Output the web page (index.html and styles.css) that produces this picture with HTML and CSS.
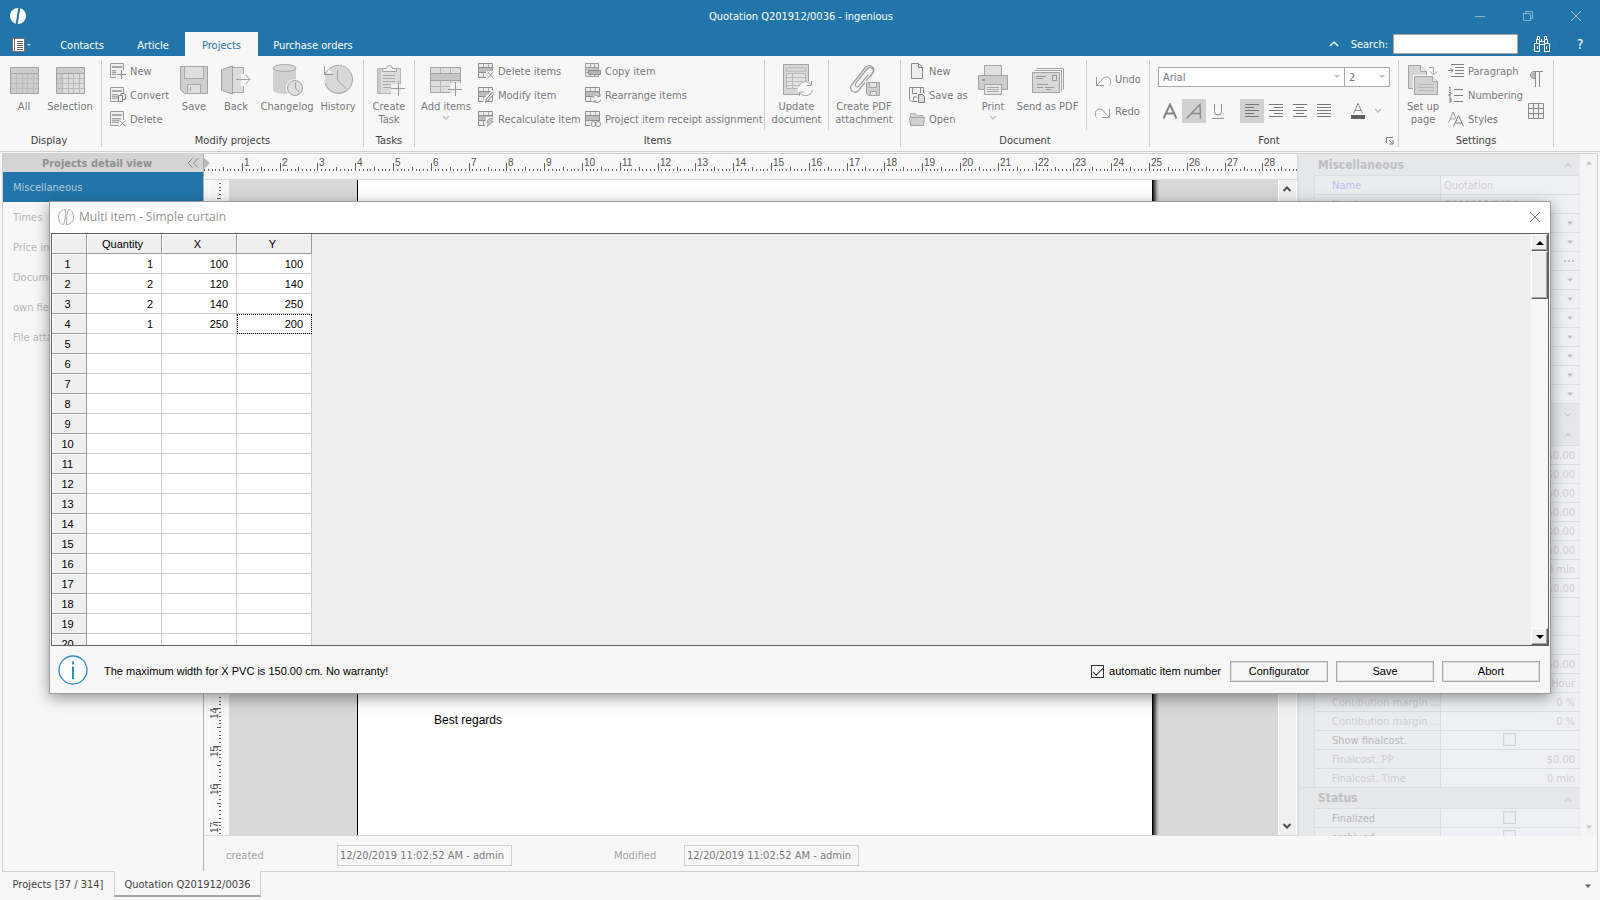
FILE: index.html
```
<!DOCTYPE html>
<html lang="en">
<head>
<meta charset="utf-8">
<title>Quotation Q201912/0036 - ingenious</title>
<link rel="stylesheet" href="styles.css">
</head>
<body>
<svg class="defs" aria-hidden="true">
  <symbol id="i-table" viewBox="0 0 32 32"><path d="M2.5 3.5h28v26h-28z" fill="#cdcdcd" stroke="#a3a3a3"/><path d="M3 9.5h27" stroke="#a3a3a3"/><path d="M3 14.5h27M3 19.5h27M3 24.5h27M8.5 10v19M14.5 10v19M19.500 10v19M25.500 10v19" stroke="#bcbcbc" fill="none"/></symbol>
  <symbol id="i-tablesel" viewBox="0 0 32 32"><path d="M2.5 3.500h28v26h-28z" fill="#dcdcdc" stroke="#a3a3a3"/><path d="M3 4h27v5H3zM3 10h5v19H3z" fill="#cdcdcd"/><path d="M3 9.500h27" stroke="#a3a3a3"/><path d="M3 14.500h27M3 19.500h27M3 24.500h27M8.500 10v19M14.500 10v19M19.500 10v19M25.500 10v19" stroke="#b8b8b8" fill="none"/></symbol>
  <symbol id="i-form" viewBox="0 0 16 16"><path d="M.500 .500h13v14H.500z" fill="#f0f0f0" stroke="#9a9a9a"/><path d="M2 3h10v2H2z" fill="#a9a9a9"/><path d="M2 7h9v5H2z" fill="#d0d0d0"/><path d="M2 7.500h9M2 9.500h9M2 11.500h9" stroke="#a9a9a9"/></symbol>
  <symbol id="i-new" viewBox="0 0 16 16"><use href="#i-form"/><path d="M6 7h10v9H6z" fill="#f7f7f7" opacity=".85"/><path d="M11.500 7v9M7 11.500h9" stroke="#8c8c8c" fill="none"/></symbol>
  <symbol id="i-convert" viewBox="0 0 16 16"><use href="#i-form"/><path d="M8 6h8v10H8z" fill="#f7f7f7"/><path d="M8.500 8.500h4v6h-4zM11 8V6.500h3l1.500 1.500v4.500H13" stroke="#808080" fill="#eee"/></symbol>
  <symbol id="i-delete" viewBox="0 0 16 16"><use href="#i-form"/><path d="M9 9h7v7H9z" fill="#f7f7f7"/><path d="M9.500 9.500l6 6M15.500 9.500l-6 6" stroke="#999"/></symbol>
  <symbol id="i-save" viewBox="0 0 32 32"><path d="M2.500 2.500h27v27H6.500l-4-4z" fill="#cfcfcf" stroke="#a3a3a3"/><path d="M6.500 2.500h19v12h-19zM9.500 20.500h13v9h-13z" fill="#dedede" stroke="#a8a8a8"/><path d="M12.500 23v4" stroke="#a3a3a3"/></symbol>
  <symbol id="i-back" viewBox="0 0 32 32"><path d="M12.500 3.500h11v25h-11z" fill="#dcdcdc" stroke="#a3a3a3"/><path d="M21 10h7v12h-7z" fill="#f7f7f7"/><path d="M1.500 5.500l11-3.500v28l-11-3.500z" fill="#cfcfcf" stroke="#a0a0a0"/><path d="M16 15.500h14M25.500 11l4.500 4.500-4.500 4.500" stroke="#a0a0a0" fill="none"/></symbol>
  <symbol id="i-changelog" viewBox="0 0 32 32"><path d="M2 4v22c0 5 23 5 23 0V4z" fill="#cfcfcf"/><ellipse cx="13.500" cy="4" rx="11.500" ry="3.500" fill="#d8d8d8" stroke="#a8a8a8"/><circle cx="24" cy="24" r="9" fill="#f7f7f7"/><circle cx="24" cy="24" r="7.500" fill="#dedede" stroke="#a0a0a0"/><path d="M24.500 18.500V24l3.500 4" stroke="#a0a0a0" fill="none"/></symbol>
  <symbol id="i-history" viewBox="0 0 32 32"><circle cx="16.500" cy="16" r="14" fill="#d8d8d8"/><path d="M4 9a14 14 0 1 1-1 10" stroke="#a3a3a3" fill="none"/><path d="M4 3l6 6H4z" fill="#f7f7f7"/><path d="M2.500 2v8.500H11M2.500 10.500L6 6" stroke="#999" fill="none"/><path d="M15.500 6v10l8.500 8.500" stroke="#a3a3a3" fill="none"/></symbol>
  <symbol id="i-task" viewBox="0 0 32 32"><path d="M4.500 4.500h23v25h-23z" fill="#dcdcdc" stroke="#b5b5b5"/><path d="M5 5h3v24H5z" fill="#cacaca"/><path d="M9.500 7.500V4.500h4a3 3 0 0 1 6 0h4v3z" fill="#eee" stroke="#a3a3a3"/><path d="M10 11.500h12M10 14.500h12M10 17.500h12M10 20.500h8M10 23.500h9" stroke="#aaa"/><path d="M18 20h14v12H18z" fill="#f7f7f7" opacity=".8"/><path d="M25.500 17v15M18 24.500h14" stroke="#999"/></symbol>
  <symbol id="i-add" viewBox="0 0 32 32"><path d="M.500 3.500h30v25H.500z" fill="#dedede" stroke="#a3a3a3"/><path d="M10.500 4v24M20.500 4v24M1 22.500h29" stroke="#b5b5b5"/><path d="M.500 9.500h30v7H.500z" fill="#c6c6c6" stroke="#a3a3a3"/><path d="M20 19h12v12H20z" fill="#f7f7f7" opacity=".85"/><path d="M25.500 18v14M18 25.500h14" stroke="#999"/></symbol>
  <symbol id="i-rows" viewBox="0 0 16 16"><path d="M.500 .500h14v14H.500z" fill="#ececec" stroke="#8f8f8f"/><path d="M5.500 1v13M10.500 1v13" stroke="#b0b0b0"/><path d="M.500 4.500h14v5H.500z" fill="#bcbcbc" stroke="#8f8f8f"/></symbol>
  <symbol id="i-rdel" viewBox="0 0 16 16"><use href="#i-rows"/><path d="M8 8h8v8H8z" fill="#f7f7f7"/><path d="M9.500 8.500l6 7M15.500 8.500l-6 7" stroke="#999"/></symbol>
  <symbol id="i-rmod" viewBox="0 0 16 16"><use href="#i-rows"/><path d="M5 16l1-5 8-8 3 3-9 10z" fill="#f7f7f7"/><path d="M7.500 15.500l1-3.500 6-7 1.500 1.500-6 7.500z" stroke="#8c8c8c" fill="#ddd"/></symbol>
  <symbol id="i-rcalc" viewBox="0 0 16 16"><use href="#i-rows"/><path d="M8 6h8v10H7z" fill="#f7f7f7"/><path d="M11 7.500h4l-2 3h2.500L9 15.500l1.500-4h-2z" stroke="#a8a8a8" fill="#ccc"/></symbol>
  <symbol id="i-rcopy" viewBox="0 0 16 16"><path d="M.500 .500h13v13H.500z" fill="#ececec" stroke="#a0a0a0"/><path d="M.500 4.500h13M.500 9.500h13M5.500 1v13M9.500 1v13" stroke="#a0a0a0"/><path d="M1 5h12v3H1z" fill="#c4c4c4"/><path d="M3.500 7.500h12v4h-12z" fill="#b5b5b5" stroke="#8c8c8c"/></symbol>
  <symbol id="i-rarr" viewBox="0 0 16 16"><use href="#i-rows"/><circle cx="12" cy="12" r="5" fill="#f7f7f7"/><path d="M8 11a4 4 0 0 1 7-1.500V7M16 12.500a4 4 0 0 1-7 1.500v2.500M15 9.500h-2.500M9 14h2.500" stroke="#8f8f8f" fill="none"/></symbol>
  <symbol id="i-rlink" viewBox="0 0 16 16"><use href="#i-rows"/><path d="M5 10h11v6H5z" fill="#f7f7f7"/><circle cx="8.500" cy="13" r="2.500" stroke="#8f8f8f" fill="none"/><circle cx="13" cy="13" r="2.500" stroke="#8f8f8f" fill="none"/></symbol>
  <symbol id="i-update" viewBox="0 0 32 32"><path d="M2.500 .500h25v30h-25z" fill="#d6d6d6" stroke="#a3a3a3"/><path d="M5.500 4h19v3h-19zM5.500 9.500h19v15h-19z" fill="#e2e2e2" stroke="#b5b5b5"/><path d="M6 13.500h18M6 17.500h18M6 21.500h18M11.500 10v14" stroke="#b8b8b8"/><circle cx="24.500" cy="25" r="8" fill="#f7f7f7"/><path d="M17.500 23a7 7 0 0 1 13-1.500V17M31.500 26a7 7 0 0 1-13 2v4M30.500 21.500H26M18.500 28H23" stroke="#a3a3a3" fill="none"/></symbol>
  <symbol id="i-clip" viewBox="0 0 32 32"><path d="M8 19L19 5c3-4 8 0 5.500 4L11 26c-4 5-11 0-7.500-5L17 4c4-5 11-1 8 5l-3 4M8 19c-2 3 1 5 3 3L20 11" stroke="#a3a3a3" fill="none" stroke-width="1.300"/><path d="M17 17h15v15H17z" fill="#f7f7f7"/><path d="M18.500 18.500h13v13h-11l-2-2z" fill="#cfcfcf" stroke="#a3a3a3"/><path d="M21.500 18.500h7v5h-7zM22.500 27.500h6v4h-6z" fill="#e4e4e4" stroke="#a3a3a3"/></symbol>
  <symbol id="i-page" viewBox="0 0 16 16"><path d="M2.500 .500h7l4 4v11h-11z" fill="#ececec" stroke="#8c8c8c"/><path d="M9.500 .500v4h4" stroke="#8c8c8c" fill="none"/></symbol>
  <symbol id="i-saveas" viewBox="0 0 16 16"><path d="M.500 .500h14v14H2.500l-2-2z" fill="#f4f4f4" stroke="#8c8c8c"/><path d="M3.500 .500v6h8v-6M4.500 15v-5H9" stroke="#8c8c8c" fill="none"/><path d="M8 6h8v10H8z" fill="#f7f7f7"/><path d="M9.500 7.500h4l2 2v6h-6z" fill="#ddd" stroke="#7c7c7c"/></symbol>
  <symbol id="i-open" viewBox="0 0 16 16"><path d="M1.500 14V2.500h5l1.500 2h6V14z" fill="#d4d4d4" stroke="#b0b0b0"/><path d="M.500 6.500h15l-1 8h-13z" fill="#d0d0d0" stroke="#a3a3a3"/></symbol>
  <symbol id="i-print" viewBox="0 0 32 32"><path d="M7.500 1.500h17v11h-17z" fill="#e0e0e0" stroke="#a3a3a3"/><path d="M1.500 11.500h29v14h-29z" fill="#cdcdcd" stroke="#a3a3a3"/><path d="M5 15h3v2H5z" fill="#999"/><path d="M7.500 20.500h17v10h-17z" fill="#e6e6e6" stroke="#a3a3a3"/><path d="M10 23.500h12M10 25.500h12M10 27.500h12" stroke="#aaa"/></symbol>
  <symbol id="i-send" viewBox="0 0 32 32"><path d="M4.500 4.500h27v21M2.500 6.500h27v21" stroke="#a3a3a3" fill="none"/><path d="M.500 8.500h27v20H.500z" fill="#d8d8d8" stroke="#a3a3a3"/><path d="M4 12.500h10M4 14.500h7M5 20.500h11M5 23.500h6M13 23.500h9M14 25.500h5" stroke="#999"/><path d="M20.500 11.500h4v5h-4z" fill="#ddd" stroke="#999"/></symbol>
  <symbol id="i-undo" viewBox="0 0 16 16"><path d="M1.500 6v8.500H9M1.500 14.500L8 7.500c3-3 7-1 7.500 2 .500 2 0 4-1 5" stroke="#999" fill="none"/></symbol>
  <symbol id="i-redo" viewBox="0 0 16 16"><path d="M14.500 6v8.500H7M14.500 14.500L8 7.500c-3-3-7-1-7.500 2-.500 2 0 4 1 5" stroke="#999" fill="none"/></symbol>
  <symbol id="i-setup" viewBox="0 0 32 32"><path d="M1.500 1.500h12l6 6v17h-18z" fill="#d6d6d6" stroke="#a3a3a3"/><path d="M13.500 1.500v6h6" fill="#eee" stroke="#a3a3a3"/><path d="M22 3.500h4.500v7M23 7.500l3.500 3.500 4-3.500" stroke="#a3a3a3" fill="none"/><path d="M6 11h26v21H6z" fill="#f7f7f7"/><path d="M7.500 12.500h18l5 5v13h-23z" fill="#d2d2d2" stroke="#a3a3a3"/><path d="M25.500 12.500v5h5" fill="#eee" stroke="#a3a3a3"/><path d="M11 20.500h16M11 23.500h16M11 26.500h16" stroke="#b8b8b8"/></symbol>
  <symbol id="i-para" viewBox="0 0 16 16"><path d="M3 1.500h13M7 4.500h9M7 7.500h9M7 10.500h9M3 13.500h13M0 7.500h5M2.500 5L5 7.500 2.500 10" stroke="#808080" fill="none"/></symbol>
  <symbol id="i-num" viewBox="0 0 16 16"><path d="M6 2.500h9M6 8.500h9M6 14.500h9M1 .500h1v4M1 5.500h2v2H1v1.500h2M1 11h2v4H1M1 13h2" stroke="#808080" fill="none"/></symbol>
  <symbol id="i-styles" viewBox="0 0 16 16"><path d="M.500 12L5 1l4 9M2 8h5" stroke="#a3a3a3" fill="none"/><path d="M5.500 15.500l5-11 5 11M7.500 12h6.500" stroke="#808080" fill="none"/></symbol>
  <symbol id="i-pil" viewBox="0 0 16 16"><path d="M15 .500H6a3.500 3.500 0 0 0 0 7h1" stroke="#8c8c8c" fill="none"/><path d="M7 1H6a3 3 0 0 0 0 6h1z" fill="#b8b8b8"/><path d="M7.500 .500V16M11.500 .500V16" stroke="#8c8c8c"/></symbol>
  <symbol id="i-grid" viewBox="0 0 16 16"><path d="M.500 .500h15v15H.500zM.500 5.500h15M.500 10.500h15M5.500 .500v15M10.500 .500v15" stroke="#8c8c8c" fill="#eee"/></symbol>
  <symbol id="i-b" viewBox="0 0 16 16"><path d="M1.500 15.500L8 1.500 14.500 15.500M4 10.500h8" stroke="#858585" stroke-width="2" fill="none"/></symbol>
  <symbol id="i-i" viewBox="0 0 16 16"><path d="M.500 15.500L14 1.500l.500 14M5 10.500h9.500" stroke="#8c8c8c" stroke-width="1.500" fill="none"/></symbol>
  <symbol id="i-u" viewBox="0 0 16 16"><path d="M4.500 1v7.500a3.500 3.500 0 0 0 7 0V1M2 15.500h12" stroke="#8c8c8c" fill="none"/></symbol>
  <symbol id="i-al" viewBox="0 0 16 16"><path d="M1 1.500h14M1 4.500h9M1 7.500h14M1 10.500h9M1 13.500h14" stroke="#777"/></symbol>
  <symbol id="i-ar" viewBox="0 0 16 16"><path d="M1 1.500h14M6 4.500h9M1 7.500h14M6 10.500h9M1 13.500h14" stroke="#777"/></symbol>
  <symbol id="i-ac" viewBox="0 0 16 16"><path d="M1 1.500h14M4 4.500h8M1 7.500h14M4 10.500h8M1 13.500h14" stroke="#777"/></symbol>
  <symbol id="i-aj" viewBox="0 0 16 16"><path d="M1 1.500h14M1 4.500h14M1 7.500h14M1 10.500h14M1 13.500h14" stroke="#777"/></symbol>
  <symbol id="i-color" viewBox="0 0 16 16"><path d="M3.500 10.500L8 .500l4.500 10M5 7.500h6" stroke="#8c8c8c" fill="none"/><path d="M1 12h14v4H1z" fill="#606060"/></symbol>
  <symbol id="i-down" viewBox="0 0 8 8"><path d="M1 2l3 3 3-3" stroke="#c0c0c0" stroke-width="1.500" fill="none"/></symbol>
  <symbol id="i-launch" viewBox="0 0 8 8"><path d="M.500 6V.500H7M3 3l3.500 3.500M7 3v4H3" stroke="#808080" fill="none"/></symbol>
  <symbol id="i-tri" viewBox="0 0 8 8"><path d="M1 2.500h6L4 6z" fill="#c0c1c5"/></symbol>
  <symbol id="i-triup" viewBox="0 0 8 8"><path d="M1 5.500h6L4 2z" fill="#c0c1c5"/></symbol>
  <symbol id="i-dots" viewBox="0 0 12 8"><path d="M1 3h2v2H1zM5 3h2v2H5zM9 3h2v2H9z" fill="#c0c1c5"/></symbol>
</svg>

<header class="top">
  <div class="titlebar">
    <svg class="logo" viewBox="0 0 16 16"><circle cx="8" cy="8" r="8" fill="#fff"/><path d="M9.500 -1L6.500 17" stroke="#2275aa" stroke-width="2"/></svg>
    <span class="wtitle">Quotation Q201912/0036 - ingenious</span>
    <div class="winbtns">
      <button aria-label="Minimize"><svg viewBox="0 0 12 12"><path d="M1 6.500h10" stroke="#85b3d1" fill="none"/></svg></button>
      <button aria-label="Restore"><svg viewBox="0 0 12 12"><path d="M1.500 3.500h7v7h-7zM3.500 3V1.500h7v7H9" stroke="#85b3d1" fill="none"/></svg></button>
      <button aria-label="Close"><svg viewBox="0 0 12 12"><path d="M1 1l10 10M11 1L1 11" stroke="#a5c8de" fill="none"/></svg></button>
    </div>
  </div>
  <nav class="tabs">
    <button class="appmenu" aria-label="Menu"><svg viewBox="0 0 20 14"><path d="M.500 .500h12v13H.500z" fill="#fff" stroke="#7a6a60"/><path d="M2.500 0v14" stroke="#7a6a60"/><path d="M5 3.500h6M5 5.500h6M5 7.500h6M5 9.500h6M5 11.500h6" stroke="#666"/><path d="M15 6h4l-2 2z" fill="#c8d6e0"/></svg></button>
    <button class="tab">Contacts</button>
    <button class="tab t2">Article</button>
    <button class="tab on">Projects</button>
    <button class="tab t4">Purchase orders</button>
    <div class="search">
      <button class="coll" aria-label="Collapse ribbon"><svg viewBox="0 0 10 8"><path d="M1 6l4-4 4 4" stroke="#fff" stroke-width="1.500" fill="none"/></svg></button>
      <label for="q">Search:</label><input id="q" type="text">
      <button class="sq" aria-label="Find"><svg viewBox="0 0 16 16"><path d="M.500 7.500h5v8h-5zM10.500 7.500h5v8h-5zM2.500 7.500V3.500h3v4M10.500 7.500v-4h3v4M3.500 3V.500h2V3M10.500 3V.500h2V3M5.500 5.500h5M6 8.500h4M3.500 10v3M12.500 10v3M7.500 3v3" stroke="#fff" fill="none"/></svg></button>
      <button class="sq help">?</button>
    </div>
  </nav>
</header>

<section class="ribbon">
  <div class="group g-display"><div class="items">
      <button class="big w46"><svg><use href="#i-table"/></svg>All</button>
      <button class="big w46"><svg><use href="#i-tablesel"/></svg>Selection</button>
    </div><h2>Display</h2></div>
  <div class="group g-modify"><div class="items">
      <div class="col c1"><button><svg><use href="#i-new"/></svg>New</button><button><svg><use href="#i-convert"/></svg>Convert</button><button><svg><use href="#i-delete"/></svg>Delete</button></div>
      <button class="big w42"><svg><use href="#i-save"/></svg>Save</button>
      <button class="big w42"><svg><use href="#i-back"/></svg>Back</button>
      <button class="big w60"><svg><use href="#i-changelog"/></svg>Changelog</button>
      <button class="big w42"><svg><use href="#i-history"/></svg>History</button>
    </div><h2>Modify projects</h2></div>
  <div class="group g-tasks"><div class="items"><button class="big w50"><svg><use href="#i-task"/></svg><span>Create<br>Task</span></button></div><h2>Tasks</h2></div>
  <div class="group g-items"><div class="items">
      <button class="big w62"><svg><use href="#i-add"/></svg>Add items<svg class="chev"><use href="#i-down"/></svg></button>
      <div class="col c2"><button><svg><use href="#i-rdel"/></svg>Delete items</button><button><svg><use href="#i-rmod"/></svg>Modify item</button><button><svg><use href="#i-rcalc"/></svg>Recalculate item</button></div>
      <div class="col c3"><button><svg><use href="#i-rcopy"/></svg>Copy item</button><button><svg><use href="#i-rarr"/></svg>Rearrange items</button><button><svg><use href="#i-rlink"/></svg>Project item receipt assignment</button></div>
      <button class="big w63 sep"><svg><use href="#i-update"/></svg><span>Update<br>document</span></button>
      <button class="big w71 sep"><svg><use href="#i-clip"/></svg><span>Create PDF<br>attachment</span></button>
    </div><h2>Items</h2></div>
  <div class="group g-doc"><div class="items">
      <div class="col c4"><button><svg><use href="#i-page"/></svg>New</button><button><svg><use href="#i-saveas"/></svg>Save as</button><button><svg><use href="#i-open"/></svg>Open</button></div>
      <button class="big w42"><svg><use href="#i-print"/></svg>Print<svg class="chev"><use href="#i-down"/></svg></button>
      <button class="big w67"><svg><use href="#i-send"/></svg>Send as PDF</button>
      <div class="col c5 sep"><button><svg><use href="#i-undo"/></svg>Undo</button><button><svg><use href="#i-redo"/></svg>Redo</button></div>
    </div><h2>Document</h2></div>
  <div class="group g-font"><div class="fonts">
      <div class="combos"><select class="ff" aria-label="Font family"><option>Arial</option></select><select class="fs" aria-label="Font size"><option>2</option></select></div>
      <div class="fmt">
        <button aria-label="Bold"><svg><use href="#i-b"/></svg></button><button class="on" aria-label="Italic"><svg><use href="#i-i"/></svg></button><button aria-label="Underline"><svg><use href="#i-u"/></svg></button>
        <button class="on gap" aria-label="Align left"><svg><use href="#i-al"/></svg></button><button aria-label="Align right"><svg><use href="#i-ar"/></svg></button><button aria-label="Align center"><svg><use href="#i-ac"/></svg></button><button aria-label="Justify"><svg><use href="#i-aj"/></svg></button>
        <button class="gap" aria-label="Font color"><svg><use href="#i-color"/></svg></button><button class="tiny" aria-label="More colors"><svg><use href="#i-down"/></svg></button>
      </div>
    </div><h2>Font<svg class="launch"><use href="#i-launch"/></svg></h2></div>
  <div class="group g-set"><div class="items">
      <button class="big w48"><svg><use href="#i-setup"/></svg><span>Set up<br>page</span></button>
      <div class="col c6"><button><svg><use href="#i-para"/></svg>Paragraph</button><button><svg><use href="#i-num"/></svg>Numbering</button><button><svg><use href="#i-styles"/></svg>Styles</button></div>
      <div class="col c7"><button aria-label="Show marks"><svg><use href="#i-pil"/></svg></button><button aria-label="Insert table"><svg><use href="#i-grid"/></svg></button></div>
    </div><h2>Settings</h2></div>
</section>

<main class="frame">
  <aside class="side">
    <div class="sidehead"><b>Projects detail view</b><svg viewBox="0 0 12 10"><path d="M5.500 .500L1 5l4.500 4.500M11 .500L6.500 5 11 9.500" stroke="#858585" fill="none"/></svg></div>
    <a href="#" class="on">Miscellaneous</a><a href="#">Times</a><a href="#">Price information</a><a href="#">Documents</a><a href="#">own fields</a><a href="#">File attachments</a>
  </aside>
  <section class="doc">
    <svg class="hruler" id="hr"></svg>
    <div class="work">
      <svg class="vruler" id="vr"></svg>
      <div class="canvas"><div class="paper"><p>Best regards</p></div></div>
      <div class="vscroll"><svg viewBox="0 0 10 8"><path d="M1.500 6L5 2.500 8.500 6" stroke="#505050" stroke-width="2" fill="none"/></svg><svg viewBox="0 0 10 8"><path d="M1.500 2L5 5.500 8.500 2" stroke="#505050" stroke-width="2" fill="none"/></svg></div>
    </div>
  </section>
  <aside class="props">
    <div class="plist" id="props"></div>
    <div class="pscroll"><svg><use href="#i-triup"/></svg><svg><use href="#i-tri"/></svg></div>
  </aside>
  <footer class="stamp">
    <label for="cr">created</label><input id="cr" type="text" readonly value="12/20/2019 11:02:52 AM - admin">
    <label class="mod" for="mo">Modified</label><input id="mo" type="text" readonly value="12/20/2019 11:02:52 AM - admin">
  </footer>
</main>

<nav class="wtabs"><button>Projects [37 / 314]</button><button class="on">Quotation Q201912/0036</button><svg><use href="#i-tri"/></svg></nav>

<div class="dialog" role="dialog" aria-labelledby="dt">
  <div class="dhead">
    <svg class="dlogo" viewBox="0 0 16 16"><path d="M7.500 .500C3 .500 .500 4 .500 8s2 7.500 5 7.500C7 12 8 5 7.500 .500zM8.500 15.500c4.500 0 7-3.500 7-7.500s-2-7.500-5-7.500C9 4 8 11 8.500 15.500z" fill="none" stroke="#aaa"/></svg>
    <span id="dt">Multi item - Simple curtain</span>
    <button aria-label="Close dialog"><svg viewBox="0 0 12 12"><path d="M1 1l10 10M11 1L1 11" stroke="#808080" fill="none"/></svg></button>
  </div>
  <div class="dgrid">
    <div class="dtable"><table><thead><tr><th></th><th>Quantity</th><th>X</th><th>Y</th></tr></thead><tbody id="rows"></tbody></table></div>
    <div class="dscroll"><button aria-label="Scroll up"><svg viewBox="0 0 8 8"><path d="M0 6h8L4 2z" fill="#000"/></svg></button><div class="thumb"></div><button class="dn" aria-label="Scroll down"><svg viewBox="0 0 8 8"><path d="M0 2h8L4 6z" fill="#000"/></svg></button></div>
  </div>
  <div class="dfoot">
    <svg class="info" viewBox="0 0 30 30"><circle cx="15" cy="15" r="14" fill="#fff" stroke="#2e8bc8" stroke-width="1.300"/><path d="M15 11.500V24M15 6.500v3" stroke="#2e8bc8" stroke-width="2"/></svg>
    <span class="msg">The maximum width for X PVC is 150.00 cm. No warranty!</span>
    <label class="chk"><input type="checkbox" checked>automatic item number</label>
    <button>Configurator</button><button>Save</button><button>Abort</button>
  </div>
</div>
<script src="app.js"></script>
</body>
</html>
```
FILE: app.js
```
const CM = 37.8;

// Rulers: one tall tick per centimetre, a medium one at each half, short ones between.
function ruler(count, vertical, start) {
  let ticks = '', nums = '';
  for (let i = 0; i <= count * 10; i++) {
    const p = Math.round(start + i * CM / 10);
    const len = i === 0 ? 2 : i % 10 === 0 ? 8 : i % 5 === 0 ? 4 : 2;
    ticks += vertical
      ? `<rect x="${11 - (i === 0 ? 8 : len)}" y="${p}" width="${i === 0 ? 8 : len}" height="1"/>`
      : `<rect x="${p}" y="${16 - len}" width="1" height="${len}"/>`;
    if (i && i % 10 === 0 && i < count * 10) {
      nums += vertical
        ? `<text transform="translate(8 ${p + 11}) rotate(-90)">${i / 10}</text>`
        : `<text x="${p + 2}" y="11">${i / 10}</text>`;
    }
  }
  return `<g fill="#606060">${ticks}</g>${nums}`;
}
document.getElementById('hr').innerHTML =
  '<path d="M0 3l6 5-6 6z" fill="#b8b8b8"/>' + ruler(29, false, 0);
document.getElementById('vr').innerHTML = ruler(18, true, -1);

// Item grid
const data = [[1, 100, 100], [2, 120, 140], [2, 140, 250], [1, 250, 200]];
let html = '';
for (let r = 1; r <= 20; r++) {
  const v = data[r - 1] || ['', '', ''];
  html += `<tr><th>${r}</th>${v.map((x, c) => `<td${r === 4 && c === 2 ? ' class="cur"' : ''}>${x}</td>`).join('')}</tr>`;
}
document.getElementById('rows').innerHTML = html;

// Property list: [label, value, kind]
const icon = (id) => `<svg class="${id}"><use href="#i-${id}"/></svg>`;
const chev = (open) => `<svg viewBox="0 0 8 8"><path d="${open ? 'M1 6l3-3 3 3' : 'M1 2l3 3 3-3'}" stroke="#ccced2" stroke-width="1.500" fill="none"/></svg>`;
const tri = ['', icon('tri')];
const list = [
  { head: 'Miscellaneous', open: true },
  ['Name', 'Quotation', 'link'], ['Number', 'Q201912/0036', 'link'],
  tri, tri, ['', icon('dots')], tri, tri, tri, tri, tri, tri, tri,
  { head: '', open: false }, { head: '', open: true },
  ['', '$0.00'], ['', '$0.00'], ['', '$0.00'], ['', '$0.00'], ['', '$0.00'], ['', '$0.00'],
  ['', '0 min'], ['', '$0.00'], ['', ''], ['', ''], ['', ''], ['', '$0.00'], ['', 'Hour'],
  ['Contibution margin ...', '0 %'], ['Contibution margin ...', '0 %'],
  ['Show finalcost.', 'check', 'dark'], ['Finalcost. PP', '$0.00'], ['Finalcost. Time', '0 min'],
  { head: 'Status', open: true },
  ['Finalized', 'check', 'dark'], ['archived', 'check', 'dark']
];
document.getElementById('props').innerHTML = list.map((e) => e.head !== undefined
  ? `<div class="phead"><b>${e.head}</b>${chev(e.open)}</div>`
  : e[1] === 'check'
    ? `<label class="prow dark"><span>${e[0]}</span><span class="mid"><input type="checkbox" disabled></span></label>`
    : `<div class="prow ${e[2] || ''}"><span>${e[0]}</span><span>${e[1]}</span></div>`).join('');
```
FILE: styles.css
```
* { box-sizing: border-box; }
html, body { height: 100%; margin: 0; }
body { display: flex; flex-direction: column; overflow: hidden; position: relative; background: #f7f7f7; color: #444; font: 11px/13px "DejaVu Sans Condensed", "DejaVu Sans", sans-serif; }
button { font: inherit; color: inherit; background: none; border: 0; padding: 0; margin: 0; }
input, select { font: inherit; }
svg { display: block; flex: none; }
.defs { position: absolute; width: 0; height: 0; }

.top { background: #2275aa; color: #fff; flex: none; }
.titlebar { height: 32px; display: grid; grid-template-columns: 1fr auto 1fr; align-items: center; padding-left: 10px; }
.wtitle { padding-right: 8px; }
.logo { width: 16px; height: 16px; }
.winbtns { display: flex; justify-content: flex-end; }
.winbtns button { width: 48px; height: 32px; display: grid; place-items: center; }
.winbtns svg { width: 12px; height: 12px; }
.tabs { height: 24px; display: flex; align-items: stretch; }
.appmenu { width: 43px; padding: 2px 0 0 12px; }
.appmenu svg { width: 20px; height: 14px; }
.tab { width: 78px; padding-top: 2px; }
.tab.t2 { width: 64px; }
.tab.on { width: 73px; background: #f7f7f7; color: #2275aa; }
.tab.t4 { width: 110px; }
.search { margin-left: auto; display: flex; align-items: center; padding-right: 2px; }
.coll { width: 10px; margin-right: 12px; }
.coll svg { width: 10px; height: 8px; }
.search label { margin-right: 5px; }
.search input { width: 125px; height: 20px; border: 1px solid #a9a9a9; background: #fff; margin-right: 6px; }
.sq { width: 36px; height: 22px; border: 1px solid #2f69a8; display: grid; place-items: center; margin-right: 2px; border-radius: 2px; }
.sq svg { width: 16px; height: 16px; }
.sq:last-child { margin-right: 0; }
.help { font-size: 14px; }

.ribbon { flex: none; display: flex; height: 96px; padding: 4px 0 4px 1px; border-bottom: 1px solid #d0d0d0; color: #7a7a80; }
.group { display: flex; flex-direction: column; border-right: 1px solid #cfcfcf; }
.items, .fonts { height: 76px; display: flex; align-items: flex-start; }
.group h2 { margin: 0; padding-top: 2px; font: inherit; color: #444; text-align: center; position: relative; }
.launch { width: 8px; height: 8px; position: absolute; right: 4px; top: 5px; }
.g-display { width: 101px; }
.g-display h2 { padding-right: 4px; }
.g-modify { width: 262px; }
.g-tasks { width: 51px; }
.g-items { width: 486px; }
.g-doc { width: 249px; }
.g-font { width: 249px; }
.g-font h2 { padding-right: 10px; }
.g-set { width: 155px; }
.big { height: 70px; display: flex; flex-direction: column; align-items: center; justify-content: flex-start; padding-top: 4px; text-align: center; white-space: nowrap; }
.big > svg { width: 32px; height: 32px; margin-bottom: 4px; }
.big > svg.chev { width: 8px; height: 8px; margin: 1px 0 0; }
.w42 { width: 42px; } .w46 { width: 46px; } .w48 { width: 48px; } .w50 { width: 50px; } .w60 { width: 60px; }
.w62 { width: 62px; } .w63 { width: 64px; } .w67 { width: 67px; margin-right: 5px; } .w71 { width: 71px; }
.sep { border-left: 1px solid #cfcfcf; }
.col { display: flex; flex-direction: column; align-items: flex-start; }
.col button { height: 24px; display: flex; align-items: center; gap: 4px; white-space: nowrap; padding-bottom: 2px; }
.col svg { width: 16px; height: 16px; }
.c1 { width: 71px; padding-left: 8px; }
.c2 { width: 107px; padding-left: 1px; }
.c3 { width: 180px; padding-left: 1px; }
.c4 { width: 71px; padding-left: 8px; }
.c5 { width: 63px; height: 70px; padding: 8px 0 0 8px; gap: 8px; }
.c6 { width: 81px; padding-left: 1px; }
.c7 { gap: 8px; padding-top: 8px; }
.fonts { flex-direction: column; padding: 7px 8px 0; }
.combos { display: flex; width: 100%; }
.combos select { appearance: none; height: 20px; border: 1px solid #a9a9a9; border-radius: 0; padding: 0 4px; color: #7a7a80; background: #fff url("data:image/svg+xml,%3Csvg xmlns='http://www.w3.org/2000/svg' width='6' height='4'%3E%3Cpath d='M0 0h6L3 3z' fill='%23c0c0c0'/%3E%3C/svg%3E") no-repeat right 4px center; }
.ff { flex: 1; }
.fs { width: 46px; margin-left: -1px; }
.fmt { display: flex; margin-top: 12px; }
.fmt button { width: 24px; height: 24px; display: grid; place-items: center; }
.fmt svg { width: 16px; height: 16px; }
.fmt .on { background: #d0d0d0; }
.fmt .gap { margin-left: 10px; }
.fmt .tiny { width: 16px; }
.fmt .tiny svg { width: 8px; height: 8px; }

.frame { flex: 1; min-height: 0; margin: 1px 2px 0; border: 1px solid #cfcfcf; display: grid; grid-template: minmax(0, 1fr) 35px / 201px minmax(0, 1fr) 300px; }
.side { grid-row: 1 / 3; border-right: 1px solid #b0b0b0; overflow: hidden; }
.sidehead { height: 18px; background: #d4d4d4; display: flex; align-items: center; color: #909090; padding-right: 4px; font-size: 11px; }
.sidehead b { flex: 1; text-align: center; padding-left: 4px; }
.sidehead svg { width: 12px; height: 10px; }
.side a { display: flex; align-items: center; height: 30px; padding-left: 10px; color: #b8b8bc; text-decoration: none; }
.side a.on { background: #2275aa; color: #b4c8d6; }

.doc { display: flex; flex-direction: column; min-width: 0; }
.hruler { width: 100%; height: 26px; border-top: 1px solid #fff; border-bottom: 1px solid #d8d8d8; overflow: hidden; }
.hruler text, .vruler text { font: 10px "Liberation Sans", sans-serif; fill: #555; }
.work { flex: 1; display: flex; min-height: 0; border-bottom: 1px solid #d8d8d8; }
.vruler { width: 14px; height: 100%; margin: 0 6px 0 5px; border: solid #fff; border-width: 0 1px; overflow: hidden; }
.canvas { flex: 1; background: #d8d8d8; padding: 0 126px 0 128px; display: flex; }
.paper { flex: 1; background: #fff; border-left: 1px solid #000; box-shadow: 1px 0 #000, 2px 0 #333, 3px 0 #555, 4px 0 #777, 5px 0 #999, 6px 0 #bbb, 7px 0 #ccc; display: flex; align-items: flex-end; clip-path: inset(0 -8px 0 0); }
.paper p { margin: 0 0 108px 76px; font: 12px/14px "Liberation Sans", sans-serif; color: #000; }
.vscroll { width: 19px; background: #f0f0f0; display: flex; flex-direction: column; justify-content: space-between; align-items: center; padding: 5px 1px 5px 0; border: solid #fff; border-width: 0 1px; }
.vscroll svg { width: 10px; height: 8px; }

.props { display: flex; border-left: 2px solid #dcdddf; background: #f4f4f6; overflow: hidden; min-height: 0; }
.plist { flex: 1; background: #e6e7e9; overflow: hidden; border-right: 1px solid #e8e9ec; }
.phead { height: 21px; padding: 1px 7px 0 19px; display: flex; align-items: center; justify-content: space-between; color: #bfc0c3; font-size: 12px; }
.phead svg { width: 8px; height: 8px; }
.prow { height: 19px; margin-left: 15px; display: grid; grid-template-columns: 125px 1fr; border: solid #dcdde0; border-width: 1px 0 0 1px; color: #cfcfd6; }
.prow + .phead { border-top: 1px solid #dcdde0; }
.prow span { padding: 3px 4px 0 17px; background: #eaecee; white-space: nowrap; overflow: hidden; }
.prow span + span { padding-left: 3px; text-align: right; background: #eff0f3; border-left: 1px solid #dcdde0; }
.prow.link span:first-child { color: #bfc0f3; }
.prow.link span + span { text-align: left; }
.prow.dark { color: #b8b9be; }
.prow span.mid { text-align: center; padding-top: 2px; }
.prow input { appearance: none; width: 13px; height: 13px; margin: 0 auto; border: 1px solid #d4d5da; box-shadow: inset 0 0 0 1px #e8e9ec; display: block; }
.prow svg { width: 8px; height: 8px; margin: 2px 1px 0 auto; }
.prow svg.dots { width: 12px; margin-right: 0; }
.pscroll { width: 17px; display: flex; flex-direction: column; justify-content: space-between; align-items: center; padding: 5px 0; }
.pscroll svg { width: 8px; height: 8px; }

.stamp { grid-column: 2 / 4; display: flex; align-items: center; padding: 3px 0 0 22px; color: #a5a5aa; }
.stamp label { width: 111px; }
.stamp .mod { width: 70px; margin-left: 102px; }
.stamp input { width: 175px; height: 21px; border: 1px solid #cfcfcf; background: #f7f7f7; padding: 0 2px; color: #7a7a80; }

.wtabs { flex: none; height: 29px; display: flex; align-items: flex-start; margin: -1px 8px 0 2px; position: relative; }
.wtabs button { height: 26px; width: 112px; }
.wtabs .on { width: 147px; padding-top: 2px; border: solid #cfcfcf; border-width: 0 1px 2px; border-bottom-color: #a5a5a5; background: #f7f7f7; }
.wtabs svg { width: 8px; height: 8px; margin: 11px 0 0 auto; }
.wtabs svg use { filter: brightness(.5); }

.dialog { position: absolute; inset: 201px 49px 206px; border: 1px solid #9c9c9c; background: #f7f7f7; display: flex; flex-direction: column; box-shadow: 0 4px 14px rgba(0, 0, 0, .4); font-family: "Liberation Sans", sans-serif; color: #000; }
.dhead { height: 31px; background: #fff; display: flex; align-items: center; padding: 0 9px 2px 8px; color: #959595; font: 12px/16px "Open Sans", sans-serif; }
.dlogo { width: 16px; height: 16px; margin-right: 5px; }
.dhead button { margin-left: auto; }
.dhead button svg { width: 12px; height: 12px; }
.dgrid { flex: 1; min-height: 0; margin: 0 1px; border: 1px solid #606060; background: #efefef; display: flex; }
.dtable { flex: 1; overflow: hidden; }
.dtable table { border-collapse: separate; border-spacing: 0; table-layout: fixed; width: 260px; }
.dtable th, .dtable td { width: 75px; height: 20px; padding: 2px 0 0; font-weight: normal; border: solid #cfcfcf; border-width: 0 1px 1px 0; }
.dtable th { background: #efefef; border-color: #9c9c9c; box-shadow: inset 1px 1px #fff; padding-right: 3px; }
.dtable th:first-child { width: 35px; }
.dtable td { background: #fff; text-align: right; padding-right: 8px; }
.dtable td.cur { outline: 1px dotted #000; outline-offset: -1px; }
.dscroll { width: 17px; display: flex; flex-direction: column; background: #f6f6f6; }
.dscroll button, .thumb { width: 17px; height: 17px; background: #efefef; border: 1px solid; border-color: #fff #606060 #606060 #fff; box-shadow: inset -1px -1px #a5a5a5; display: grid; place-items: center; flex: none; }
.dscroll svg { width: 8px; height: 8px; }
.dscroll .thumb { height: 48px; }
.dscroll .dn { margin-top: auto; }
.dfoot { height: 47px; flex: none; display: flex; align-items: center; padding: 4px 10px 0 8px; }
.info { width: 30px; height: 30px; margin: 0 16px 4px 0; }
.msg { flex: 1; }
.chk { display: flex; align-items: center; margin-right: 1px; }
.chk input { appearance: none; width: 13px; height: 13px; margin: 0 5px 0 0; border: 1px solid #333; background: #fff; display: grid; place-items: center; }
.chk input:checked::before { content: ""; width: 9px; height: 4px; border: solid #333; border-width: 0 0 1px 1px; transform: translateY(-1px) rotate(-45deg); }
.dfoot button { width: 98px; height: 21px; margin-left: 8px; border: 1px solid #a9a9a9; box-shadow: inset 0 0 0 1px #e0e0e0; background: #f7f7f7; }
```
